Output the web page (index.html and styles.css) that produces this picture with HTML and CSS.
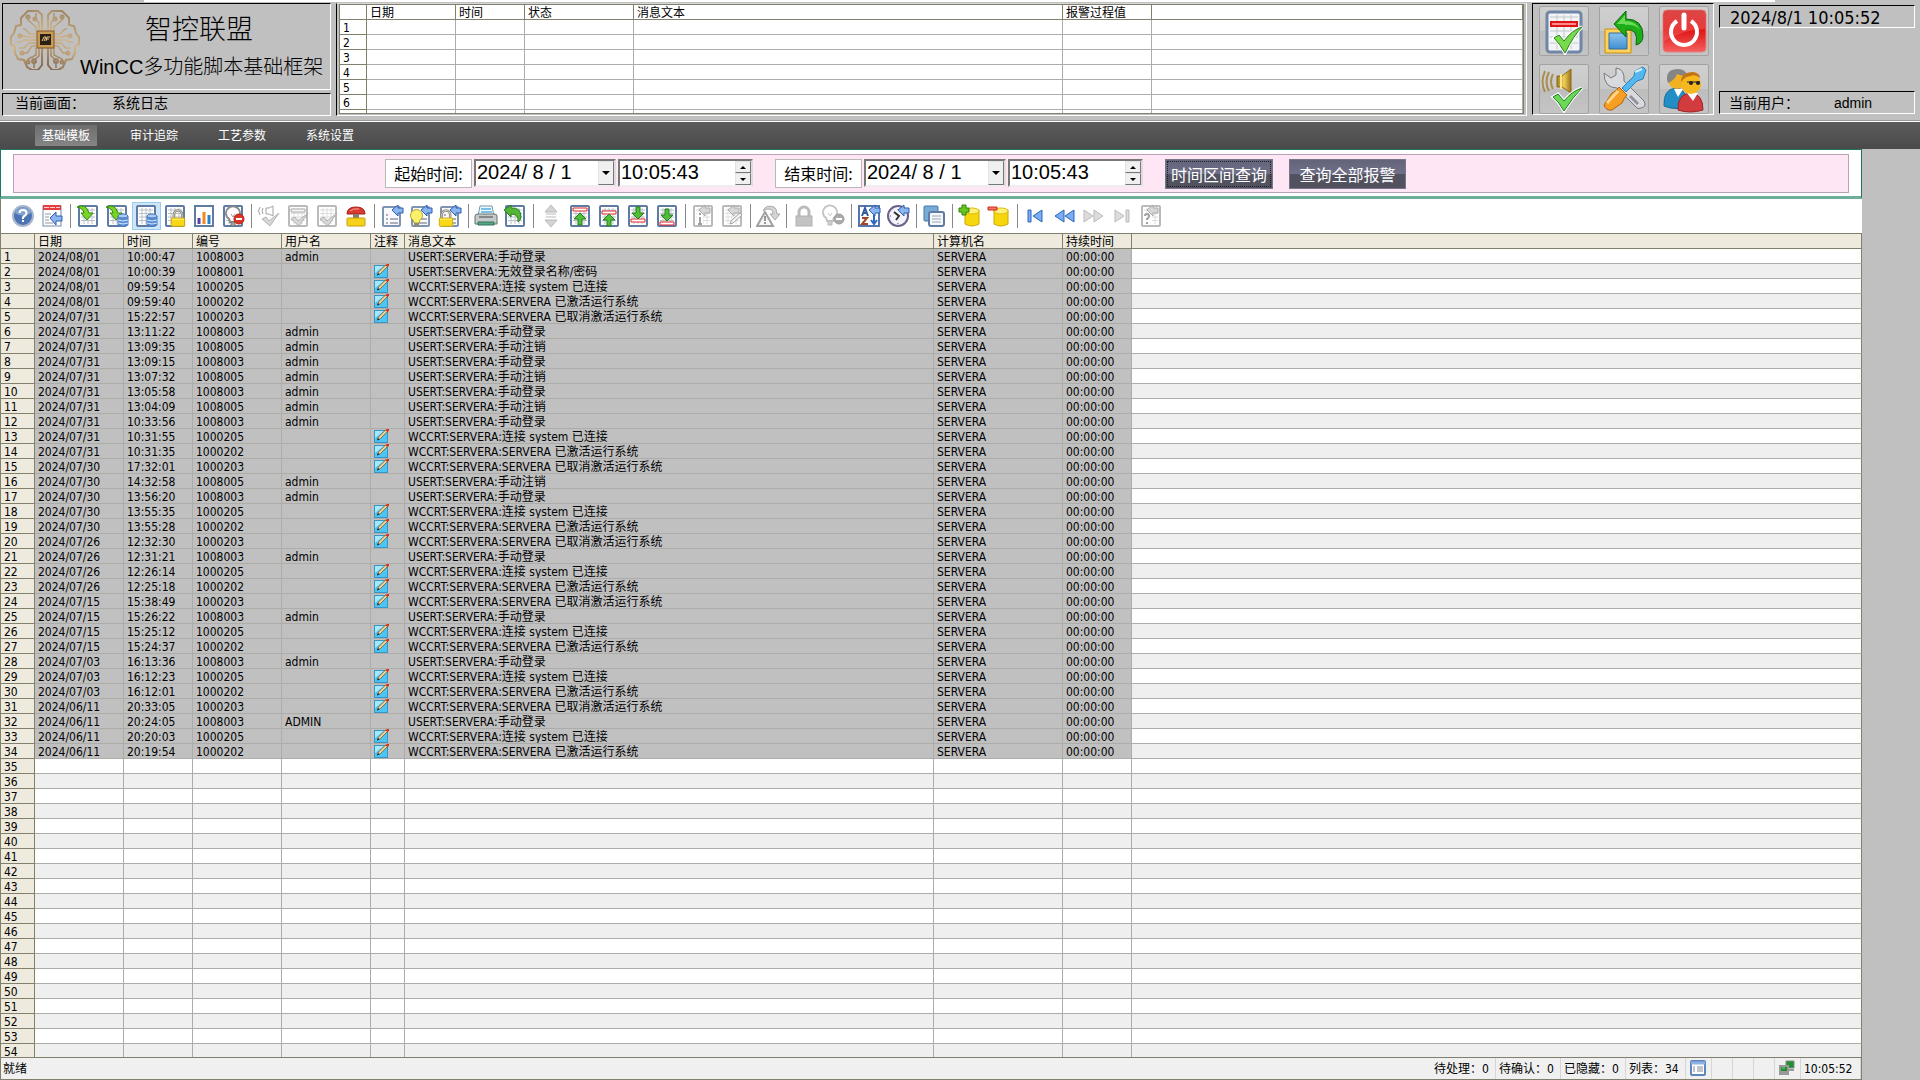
FILE: index.html
```html
<!DOCTYPE html>
<html lang="zh-CN">
<head>
  <meta charset="UTF-8">
  <meta name="viewport" content="width=device-width, initial-scale=1.0">
  <title>系统日志</title>
  <link rel="stylesheet" href="styles.css">
</head>
<body>
  <!-- Shared icon shapes -->
  <svg class="sprite" width="0" height="0" aria-hidden="true">
    <linearGradient id="g-gold" gradientUnits="userSpaceOnUse" x1="0" y1="0" x2="35" y2="60">
      <stop offset="0" stop-color="#8f7558"/><stop offset=".5" stop-color="#d2b487"/><stop offset="1" stop-color="#7c6048"/>
    </linearGradient>
    <linearGradient id="g-red" x1="0" y1="0" x2="0" y2="1">
      <stop offset="0" stop-color="#c92b2b"/><stop offset=".5" stop-color="#e01818"/><stop offset="1" stop-color="#f46060"/>
    </linearGradient>
    <linearGradient id="g-blue" x1="0" y1="0" x2="0" y2="1">
      <stop offset="0" stop-color="#8cc4ee"/><stop offset="1" stop-color="#3f8fd2"/>
    </linearGradient>
    <linearGradient id="g-horn" x1="0" y1="0" x2="1" y2="0">
      <stop offset="0" stop-color="#a57c1a"/><stop offset=".5" stop-color="#f0cf58"/><stop offset="1" stop-color="#9a7418"/>
    </linearGradient>

    <symbol id="sheet" viewBox="0 0 24 24">
      <rect x="3" y="2" width="18" height="20" rx="1" fill="#fff" stroke="#5d7ba3" stroke-width="2"/>
      <path d="M5 6h14M5 9.500h14M5 13h14M5 16.500h14M8 4v16M12 4v16M16 4v16" stroke="#b9c0c9" fill="none"/>
    </symbol>
    <symbol id="page" viewBox="0 0 24 24">
      <rect x="3" y="3" width="17" height="19" rx="1" fill="#f7f9fc" stroke="#7e94b5" stroke-width="2"/>
      <path d="M6 11h2M6 15h2M6 19h2M10 15h8M10 19h8" stroke="#667" fill="none"/>
    </symbol>
    <symbol id="left" viewBox="0 0 24 24">
      <path d="M12 6l6-5v3h5v5h-5v3z" fill="#8cb6f0" stroke="#2d5fb0"/>
    </symbol>
    <symbol id="db" viewBox="0 0 24 24">
      <path d="M13 12v9q5 3 10 0v-9z" fill="#5b8fd6" stroke="#4a78b8"/>
      <ellipse cx="18" cy="12" rx="5" ry="2" fill="#a9ccf5" stroke="#4a78b8"/>
      <path d="M13 16q5 2 10 0M13 19q5 2 10 0" fill="none" stroke="#cfe2fa"/>
    </symbol>
    <symbol id="down" viewBox="0 0 24 24">
      <path d="M1 3q9-4 12 6h4l-6 7-6-7h3q-1-5-7-6z" fill="#76d527" stroke="#328a0c"/>
    </symbol>
    <symbol id="lock" viewBox="0 0 24 24">
      <path d="M7 13V8a5 5 0 0 1 10 0v5" fill="none" stroke="#8c8778" stroke-width="3"/>
      <path d="M7 13V8a5 5 0 0 1 10 0v5" fill="none" stroke="#dfdbcb"/>
      <rect x="4" y="12" width="16" height="10" rx="1" fill="#f9d916" stroke="#cda205"/>
      <path d="M5 13.500h14" stroke="#fff18c"/>
    </symbol>
    <symbol id="bulb" viewBox="0 0 24 24">
      <path d="M9 18q0-3-3-5a7 7 0 1 1 12 0q-3 2-3 5z" fill="#fff" stroke="#8b8b8b" stroke-width="2"/>
      <path d="M10 18h4v4h-4z" fill="#a4a69c" stroke="#74766d"/>
      <path d="M10 10l2 3 2-3" fill="none" stroke="#999"/>
    </symbol>
    <symbol id="minus" viewBox="0 0 24 24">
      <circle cx="18" cy="15" r="5" fill="#df3424" stroke="#b51d12"/>
      <path d="M15 15h6" stroke="#fff" stroke-width="2"/>
    </symbol>
    <symbol id="check" viewBox="0 0 24 24">
      <path d="M5 15l4-2 3 4 10-8-9 13z" fill="#75ce52" stroke="#2a7f22"/>
    </symbol>
    <symbol id="up" viewBox="0 0 24 24">
      <path d="M12 9l6 6h-4v6h-4v-6H6z" fill="#52bd38" stroke="#22801a"/>
    </symbol>

    <!-- Toolbar icons -->
    <symbol id="i-help" viewBox="0 0 24 24">
      <circle cx="12" cy="12" r="10" fill="#4c74b2" stroke="#a9b7cc" stroke-width="2"/>
      <path d="M4 9a8.500 8.500 0 0 1 16 0q-8 5-16 0z" fill="#83a3d1"/>
      <path d="M8.500 9q0-3 3.500-3t3.500 3q0 2-2 3t-1.500 3" fill="none" stroke="#fff" stroke-width="2"/>
      <rect x="11" y="16" width="2" height="2" fill="#fff"/>
    </symbol>
    <symbol id="i-config" viewBox="0 0 24 24">
      <rect x="3" y="2" width="18" height="20" fill="#fff" stroke="#7288a8"/>
      <path d="M3 1h18v5H3z" fill="#e53e3e"/><path d="M4 3.500h16" stroke="#ffd0d0" stroke-dasharray="5 1"/>
      <path d="M5 10h6M5 13h4M5 16h4M5 19h8" stroke="#8f969f"/>
      <path d="M10 14l6-6v4h6v5h-6v4z" fill="#8cb6f0" stroke="#2d5fb0"/>
    </symbol>
    <symbol id="i-msg" viewBox="0 0 24 24"><use href="#sheet"/><use href="#down"/></symbol>
    <symbol id="i-short" viewBox="0 0 24 24"><use href="#sheet"/><use href="#down"/><use href="#db"/></symbol>
    <symbol id="i-long" viewBox="0 0 24 24"><use href="#sheet"/><use href="#db"/></symbol>
    <symbol id="i-locklist" viewBox="0 0 24 24"><use href="#sheet"/><use href="#lock" x="5" y="4" width="20" height="20"/></symbol>
    <symbol id="i-stat" viewBox="0 0 24 24">
      <rect x="3" y="2" width="18" height="20" fill="#fff" stroke="#5d7ba3" stroke-width="2"/>
      <path d="M7 20v-6" stroke="#5c3fa4" stroke-width="3"/><path d="M12 20V8" stroke="#ef8a22" stroke-width="3"/><path d="M17 20v-9" stroke="#2d7fc7" stroke-width="3"/>
    </symbol>
    <symbol id="i-hide" viewBox="0 0 24 24"><use href="#sheet"/><use href="#bulb"/><use href="#minus"/></symbol>
    <symbol id="i-horn" viewBox="0 0 24 24">
      <path d="M9 4h3l4-2v10l-4-2H9zM6 4q-2 3 0 6M3 3q-3 4 0 8" fill="none" stroke="#444"/><use href="#check"/>
    </symbol>
    <symbol id="i-ack1" viewBox="0 0 24 24"><use href="#sheet"/><path d="M5 5h14v3H5z" fill="#eee" stroke="#555"/><use href="#check"/></symbol>
    <symbol id="i-ackall" viewBox="0 0 24 24"><use href="#sheet"/><use href="#check"/></symbol>
    <symbol id="i-estop" viewBox="0 0 24 24">
      <path d="M3 10q0-7 9-7t9 7z" fill="#d93a30" stroke="#a32018"/><path d="M6 7q3-3 9-2" fill="none" stroke="#f7a49c"/>
      <path d="M9 10h6v5H9z" fill="#857d70"/><rect x="3" y="14" width="18" height="8" rx="1" fill="#f7d21c" stroke="#c79c08"/>
    </symbol>
    <symbol id="i-sel" viewBox="0 0 24 24"><use href="#page"/><use href="#left"/></symbol>
    <symbol id="i-selview" viewBox="0 0 24 24">
      <use href="#page"/><path d="M5 19q0-3-3-5a6 6 0 1 1 11 0q-3 2-3 5z" fill="#fbf06a" stroke="#b3a324"/><path d="M5 19h5v4H5z" fill="#8b8d80"/><use href="#left"/>
    </symbol>
    <symbol id="i-sellock" viewBox="0 0 24 24"><use href="#page"/><use href="#lock" x="-2" y="4" width="20" height="20"/><use href="#left"/></symbol>
    <symbol id="i-print" viewBox="0 0 24 24">
      <path d="M6 2h12l2 10H4z" fill="#f4fbff" stroke="#6999b3"/><path d="M7 5h10M7 8h11" stroke="#79c1e4" stroke-width="2"/>
      <path d="M1 12q0-2 3-2h16q3 0 3 2v8H1z" fill="#c4cac9" stroke="#68706e"/><path d="M5 13h14" stroke="#444"/><path d="M4 18h16v3H4z" fill="#55a886" stroke="#35715a"/>
    </symbol>
    <symbol id="i-export" viewBox="0 0 24 24">
      <use href="#sheet"/><path d="M1 6l7-5v3q10-1 10 9 0 3-3 5 1-8-7-8v3z" fill="#54b637" stroke="#2b7f15"/>
    </symbol>
    <symbol id="i-scroll" viewBox="0 0 24 24">
      <path d="M12 1l6 7H6zM7 10h10M7 13h10M12 23l6-7H6z" fill="#aaa" stroke="#777"/>
    </symbol>
    <symbol id="i-first" viewBox="0 0 24 24"><use href="#sheet"/><path d="M5 4h14v3H5z" fill="#fff" stroke="#e02525"/><use href="#up"/></symbol>
    <symbol id="i-prev" viewBox="0 0 24 24"><use href="#sheet"/><path d="M5 7h14v3H5z" fill="#fff" stroke="#e02525"/><use href="#up" y="1"/></symbol>
    <symbol id="i-next" viewBox="0 0 24 24"><use href="#sheet"/><path d="M5 15h14v3H5z" fill="#fff" stroke="#e02525"/><use href="#up" transform="matrix(1 0 0 -1 0 24)"/></symbol>
    <symbol id="i-last" viewBox="0 0 24 24"><use href="#sheet"/><path d="M5 18h14v3H5z" fill="#fff" stroke="#e02525"/><use href="#up" transform="matrix(1 0 0 -1 0 26)"/></symbol>
    <symbol id="i-info" viewBox="0 0 24 24"><use href="#sheet"/><path d="M6 8h6v12H6z" fill="#fff"/><path d="M9 9v2M9 13v7M7 20h4" stroke="#444" stroke-width="2"/><use href="#left" x="-4"/></symbol>
    <symbol id="i-comment" viewBox="0 0 24 24"><use href="#sheet"/><path d="M10 20l1-3 9-8 2 2-9 8z" fill="#eee" stroke="#444"/><use href="#left" x="-4"/></symbol>
    <symbol id="i-loop" viewBox="0 0 24 24">
      <path d="M7 7q3-7 11-4 3 2 3 7h3l-5 6-5-6h3q0-5-5-5-3 0-5 2z" fill="#aaa" stroke="#555"/>
      <path d="M9 8l8 14H1z" fill="#eee" stroke="#444" stroke-width="2"/><path d="M9 12v5M9 18v2" stroke="#333" stroke-width="2"/>
    </symbol>
    <symbol id="i-lock" viewBox="0 0 24 24">
      <path d="M7 12V8a5 5 0 0 1 10 0v4" fill="none" stroke="#777" stroke-width="3"/><rect x="4" y="12" width="16" height="10" fill="#888" stroke="#666"/>
    </symbol>
    <symbol id="i-unhide" viewBox="0 0 24 24"><use href="#bulb" x="-3" y="-1"/><use href="#minus"/></symbol>
    <symbol id="i-sort" viewBox="0 0 24 24">
      <rect x="2" y="2" width="20" height="20" fill="#fff" stroke="#5577ad" stroke-width="2"/>
      <path d="M5 12l3-8 3 8M6 9h4" fill="none" stroke="#315b9e" stroke-width="2"/><path d="M5 14h5l-5 6h6" fill="none" stroke="#a24528" stroke-width="2"/>
      <path d="M17 9v10M14 16l3 4 3-4" fill="none" stroke="#3268c2" stroke-width="2"/><use href="#left"/>
    </symbol>
    <symbol id="i-time" viewBox="0 0 24 24">
      <circle cx="12" cy="12" r="10" fill="#f4f2fb" stroke="#6b6288" stroke-width="2"/><path d="M8 8l5 4-3 4" fill="none" stroke="#333" stroke-width="2"/><path d="M12 5v1M12 19v1M4 12h1" stroke="#555"/><use href="#left"/>
    </symbol>
    <symbol id="i-copy" viewBox="0 0 24 24">
      <rect x="2" y="2" width="14" height="15" rx="1" fill="#76acd6" stroke="#4079a8"/><rect x="7" y="8" width="15" height="14" rx="2" fill="#f4f7fb" stroke="#5f7ba3" stroke-width="2"/><path d="M10 12h9M10 15h9M10 18h9" stroke="#98a5b5"/>
    </symbol>
    <symbol id="drum" viewBox="0 0 24 24">
      <path d="M7 6v14q7 4 14 0V6z" fill="#f6d70e" stroke="#cda800"/><ellipse cx="14" cy="7" rx="7" ry="3" fill="#fff07a" stroke="#dcba08"/>
    </symbol>
    <symbol id="i-backup" viewBox="0 0 24 24"><use href="#drum"/><path d="M4 1h4v3h3v4H8v3H4V8H1V4h3z" fill="#69c61f" stroke="#35800c"/></symbol>
    <symbol id="i-remove" viewBox="0 0 24 24"><use href="#drum"/><path d="M1 3h9v3H1z" fill="#f47a60" stroke="#cc2b18"/></symbol>
    <symbol id="i-begin" viewBox="0 0 24 24"><path d="M5 6h3v12H5zM19 6v12l-9-6z" fill="#78aef2" stroke="#2d62bb"/></symbol>
    <symbol id="i-rew" viewBox="0 0 24 24"><path d="M12 6v12l-9-6zM22 6v12l-9-6z" fill="#78aef2" stroke="#2d62bb"/></symbol>
    <symbol id="i-fwd" viewBox="0 0 24 24"><path d="M3 6v12l9-6zM13 6v12l9-6z" fill="#bbb" stroke="#777"/></symbol>
    <symbol id="i-end" viewBox="0 0 24 24"><path d="M5 6v12l9-6zM16 6h3v12h-3z" fill="#bbb" stroke="#777"/></symbol>
    <symbol id="i-ask" viewBox="0 0 24 24"><use href="#sheet"/><path d="M5 9h8v11H5z" fill="#fff"/><path d="M6 12q0-2 2-2t2 2-2 3v1M8 18v2" fill="none" stroke="#444" stroke-width="2"/><use href="#left" x="-4"/></symbol>
    <symbol id="i-note" viewBox="0 0 15 14">
      <rect x=".5" y="1.500" width="13" height="12" fill="#4cc4f4" stroke="#3a94c4"/><path d="M1 2h9L1 9z" fill="#a5e8fb"/>
      <path d="M3.500 11l1-3 7-7 2 1.500-7 7z" fill="#f2d596" stroke="#6b4a20" stroke-width=".7"/><path d="M11.500 1L13 0h2v1.500L13.500 3z" fill="#d8321e"/><path d="M3 11.500l1-2.500 1.500 1.500z" fill="#222"/>
    </symbol>
  </svg>

  <div class="app">
    <header class="top">
      <div class="brand">
        <div class="panel brand-box">
          <svg class="brand-logo" viewBox="0 0 70 60" role="img" aria-label="logo">
            <g id="half" fill="none" stroke="url(#g-gold)" stroke-width="2">
              <path d="M32 21V5l-4-4H18l-7 7v7l-5 1-2 7-3 4v7l4 3v6l3 6 6 1 3 7 5 3h6l4-5V38"/>
              <path d="M29 21V13l-3-4V3M26 21v-4l-8-7V8M29 38v8l-5 4v8M26 38v7l-8 4v3" stroke-width="1.500"/>
              <path d="M26 24h-6l-5-5h-2M26 27h-8l-4-1h-3M26 30H14l-3 2H7M26 33h-7l-5 5H9M26 36h-4l-5 7h-4" stroke-width="1.500"/>
              <circle cx="18" cy="7" r="1.500"/><circle cx="10" cy="26" r="1.500"/><circle cx="18" cy="52" r="1.500"/><circle cx="12" cy="43" r="1.500"/><circle cx="25" cy="9" r="1.500"/><circle cx="24" cy="51" r="2"/>
            </g>
            <use href="#half" transform="matrix(-1 0 0 1 70 0)"/>
            <rect x="27" y="21" width="17" height="17" fill="#c79b52" stroke="#83592b"/>
            <rect x="30" y="24" width="11" height="11" fill="#2a2017"/>
            <path d="M32 31l2-4h2l-2 4M36 31l1-4h3M36 29h3" fill="none" stroke="#e8c987"/>
          </svg>
          <div class="brand-text">
            <h1 class="brand-name">智控联盟</h1>
            <p class="brand-sub">WinCC多功能脚本基础框架</p>
          </div>
        </div>
        <div class="panel brand-page"><span>当前画面：</span><span>系统日志</span></div>
      </div>

      <div class="panel alarm-panel">
        <div class="alarm-list">
          <table class="grid alarm-table">
            <colgroup><col class="w-no-sm"><col class="w-date"><col class="w-time"><col class="w-state"><col class="w-text-sm"><col class="w-date"><col></colgroup>
            <thead><tr><th></th><th>日期</th><th>时间</th><th>状态</th><th>消息文本</th><th>报警过程值</th><th></th></tr></thead>
            <tbody id="alarm-rows"></tbody>
          </table>
        </div>
      </div>

      <div class="panel actions">
        <button class="action" aria-label="确认报警">
          <svg viewBox="0 0 48 48"><rect x="7" y="5" width="34" height="40" rx="3" fill="#f2f4f6" stroke="#6f86a6" stroke-width="3"/>
            <path d="M10 10h28M10 24h28M10 30h28M10 36h28M17 8v34M24 8v34M31 8v34" stroke="#c3c7cc"/>
            <path d="M11 15h26v4H11z" fill="#f88" stroke="#e01414" stroke-width="2"/>
            <path d="M14 31l5-3 5 6q8-11 18-14-8 8-17 26-5-9-11-15z" fill="#78db4c" stroke="#fff" stroke-width="3"/><path d="M14 31l5-3 5 6q8-11 18-14-8 8-17 26-5-9-11-15z" fill="#78db4c" stroke="#2c7c21"/></svg>
        </button>
        <button class="action" aria-label="返回">
          <svg viewBox="0 0 48 48"><path d="M5 22h26v24H5z" fill="#ffd25a" stroke="#c58e12"/><path d="M9 26h18v16H9z" fill="url(#g-blue)" stroke="#326ba3"/>
            <path d="M14 17L26 4v8q17 0 17 17 0 7-7 9 3-17-10-15v7z" fill="#1bae18" stroke="#0b640a"/><path d="M17 17l8-9v6q11 0 15 9-5-6-15-5v-1z" fill="#6ddb57"/></svg>
        </button>
        <button class="action" aria-label="退出">
          <svg viewBox="0 0 48 48"><rect x="3" y="3" width="43" height="42" rx="4" fill="url(#g-red)" stroke="#e78080"/><path d="M4 4h41v18Q26 22 4 34z" fill="#ff7777" opacity=".35"/>
            <path d="M17 14a13 13 0 1 0 14 0" fill="none" stroke="#fff" stroke-width="4"/><path d="M24 8v13" stroke="#fff" stroke-width="5" stroke-linecap="round"/></svg>
        </button>
        <button class="action" aria-label="消音">
          <svg viewBox="0 0 48 48"><path d="M17 11h5l9-7v24l-9-6h-5z" fill="url(#g-horn)" stroke="#8d6b16"/><path d="M21 9v15" stroke="#fbe588" stroke-width="2"/>
            <path d="M13 9q-4 8 0 15M9 7q-5 10 0 19M5 6q-5 11 0 21" fill="none" stroke="#aa8d50" stroke-width="2"/>
            <path d="M13 32l5-3 6 7q8-10 18-13-9 9-18 23-5-9-11-14z" fill="#6cd858" stroke="#fff" stroke-width="3"/><path d="M13 32l5-3 6 7q8-10 18-13-9 9-18 23-5-9-11-14z" fill="#6cd858" stroke="#227a26"/></svg>
        </button>
        <button class="action" aria-label="设置">
          <svg viewBox="0 0 48 48"><path d="M4 8l7 5 5-3V3q9 1 8 13l20 20q3 6-3 7-3 2-6-2L17 23Q4 23 4 8z" fill="#d9dadd" stroke="#77797e"/><path d="M30 31l8 8" stroke="#909399" stroke-width="3"/>
            <path d="M22 23L34 11l1-5 8-4 3 3-3 9-6 2-11 11z" fill="#54b8ee" stroke="#2983b8"/><path d="M35 7l7-3" stroke="#d6f2ff" stroke-width="2"/>
            <path d="M19 22l8 8q-3 3-5 8L12 45q-6 1-8-5l8-12q5-2 7-6z" fill="#f59e24" stroke="#b76108"/><path d="M7 38l11-12" stroke="#ffd58b" stroke-width="3"/></svg>
        </button>
        <button class="action" aria-label="用户">
          <svg viewBox="0 0 48 48"><path d="M4 41q-1-17 12-18 10 0 12 18-12 5-24 0z" fill="#218fc5" stroke="#186b97"/><path d="M14 24l4 8 5-8z" fill="#fff"/><circle cx="17" cy="15" r="9" fill="#f2b121"/><path d="M7 15Q6 4 18 4q8 0 9 7-6 0-10-2-2 6-9 9z" fill="#858585"/>
            <path d="M18 45q-1-16 13-17 12 1 12 17-13 4-25 0z" fill="#d33c3e" stroke="#9e2023"/><path d="M27 28l6 8 5-8z" fill="#fff"/><circle cx="31" cy="19" r="10" fill="#f7b81d"/><path d="M21 17q0-10 12-10 7 1 7 6-5-4-9-2-6 0-10 6z" fill="#c27512"/>
            <path d="M27 17h13" stroke="#222"/><circle cx="31" cy="18" r="2" fill="#222"/><circle cx="38" cy="18" r="2" fill="#222"/></svg>
        </button>
      </div>

      <div class="info">
        <div class="panel clock">2024/8/1 10:05:52</div>
        <div class="panel user"><span>当前用户：</span><span>admin</span></div>
      </div>
    </header>

    <nav class="menu">
      <a class="menu-link active" href="#">基础模板</a>
      <a class="menu-link" href="#">审计追踪</a>
      <a class="menu-link" href="#">工艺参数</a>
      <a class="menu-link" href="#">系统设置</a>
    </nav>

    <main class="screen">
      <section class="filter">
        <form class="filter-bar" onsubmit="return false">
          <div class="period">
            <label class="period-label" for="from-date">起始时间:</label>
            <div class="field date-field">
              <input id="from-date" type="text" value="2024/ 8 / 1">
              <button class="drop" aria-label="选择起始日期"><svg viewBox="0 0 8 4"><path d="M0 0h8L4 4z"/></svg></button>
            </div>
            <div class="field time-field">
              <input type="text" value="10:05:43" aria-label="起始时刻">
              <div class="spin">
                <button aria-label="增加"><svg viewBox="0 0 8 4"><path d="M0 4h8L4 0z"/></svg></button>
                <button aria-label="减少"><svg viewBox="0 0 8 4"><path d="M0 0h8L4 4z"/></svg></button>
              </div>
            </div>
          </div>
          <div class="period">
            <label class="period-label" for="to-date">结束时间:</label>
            <div class="field date-field">
              <input id="to-date" type="text" value="2024/ 8 / 1">
              <button class="drop" aria-label="选择结束日期"><svg viewBox="0 0 8 4"><path d="M0 0h8L4 4z"/></svg></button>
            </div>
            <div class="field time-field">
              <input type="text" value="10:05:43" aria-label="结束时刻">
              <div class="spin">
                <button aria-label="增加"><svg viewBox="0 0 8 4"><path d="M0 4h8L4 0z"/></svg></button>
                <button aria-label="减少"><svg viewBox="0 0 8 4"><path d="M0 0h8L4 4z"/></svg></button>
              </div>
            </div>
          </div>
          <div class="queries">
            <button class="query focused">时间区间查询</button>
            <button class="query wide">查询全部报警</button>
          </div>
        </form>
      </section>

      <div class="toolbar" id="toolbar"></div>

      <div class="log">
        <table class="grid log-table">
          <colgroup><col class="w-no"><col class="w-date"><col class="w-time"><col class="w-date"><col class="w-date"><col class="w-note"><col class="w-text"><col class="w-pc"><col class="w-time"><col></colgroup>
          <thead><tr><th></th><th>日期</th><th>时间</th><th>编号</th><th>用户名</th><th>注释</th><th>消息文本</th><th>计算机名</th><th>持续时间</th><th></th></tr></thead>
          <tbody id="log-rows"></tbody>
        </table>
      </div>

      <footer class="status">
        <span class="status-ready">就绪</span>
        <span class="cell w65">待处理：0</span>
        <span class="cell w65">待确认：0</span>
        <span class="cell w65">已隐藏：0</span>
        <span class="cell w60">列表：34</span>
        <span class="cell w26"><svg viewBox="0 0 16 16"><rect x="1" y="1" width="14" height="14" rx="1" fill="#fff" stroke="#5f86bd" stroke-width="2"/><path d="M1 3h14" stroke="#8db2e3" stroke-width="3"/><path d="M3 7h2M3 9h2M3 11h2M7 7h6M7 9h6M7 11h6" stroke="#889"/></svg></span>
        <span class="cell w21"></span>
        <span class="cell w21"></span>
        <span class="cell w21"></span>
        <span class="cell w26"><svg viewBox="0 0 16 16"><path d="M7 1h8v7H7z" fill="#1f8f31" stroke="#888"/><path d="M8 10h7" stroke="#999" stroke-width="2"/><path d="M1 6h8v6H1z" fill="#1f8f31" stroke="#999" stroke-width="2"/><path d="M3 8h3" stroke="#7dd68a"/><path d="M0 14h10" stroke="#999" stroke-width="2"/></svg></span>
        <span class="cell w60">10:05:52</span>
      </footer>
    </main>
  </div>
  <script src="script.js"></script>
</body>
</html>
```

FILE: styles.css
```css
* {
  box-sizing: border-box;
}

body {
  margin: 0;
  background: #c0c0c0;
  color: #000;
  font-family: "DejaVu Sans Condensed", "Noto Sans CJK SC", sans-serif;
  font-size: 12px;
}

button, input {
  font: inherit;
  color: inherit;
  margin: 0;
  padding: 0;
}

svg {
  display: block;
}

.app {
  height: 100vh;
  display: flex;
  flex-direction: column;
}

.panel {
  border: 1px solid;
  border-color: #000 #fff #fff #000;
}

/* Header */
.top {
  display: flex;
  gap: 5px;
  padding: 3px 5px 4px 2px;
  height: 121px;
  background: linear-gradient(#fff, #fff) 144px 0 / calc(100% - 289px) 2px no-repeat;
  border-bottom: 1px solid #999;
  flex: none;
}

.brand {
  width: 329px;
  display: flex;
  flex-direction: column;
  gap: 3px;
}

.brand-box {
  flex: 1;
  display: flex;
  padding: 6px 8px 0 7px;
}

.brand-logo {
  width: 70px;
  height: 60px;
  flex: none;
}

.brand-text {
  flex: 1;
  font-family: "Liberation Sans", "Noto Sans CJK SC", sans-serif;
  white-space: nowrap;
}

.brand-name {
  margin: 0;
  padding-left: 65px;
  font-size: 27px;
  line-height: 40px;
  font-weight: 300;
}

.brand-sub {
  margin: 0;
  font-size: 20px;
  line-height: 34px;
  font-weight: 300;
}

.brand-page, .user {
  display: flex;
  height: 23px;
  padding-left: 12px;
  gap: 27px;
  font-family: "Liberation Sans", "Noto Sans CJK SC", sans-serif;
  font-size: 14px;
  line-height: 19px;
}

.alarm-panel {
  flex: 1;
  padding: 0 2px;
  border-top-color: #d8d8d8;
}

.alarm-list {
  height: 110px;
  overflow: hidden;
  border: 1px solid #80806c;
  border-width: 0 1px 1px 0;
}

.actions {
  width: 182px;
  height: 112px;
  padding: 2px 4px 0 6px;
  display: grid;
  grid-template-columns: repeat(3, 50px);
  grid-auto-rows: 50px;
  gap: 8px 10px;
}

.action {
  border: 1px solid #a2a2a2;
  border-radius: 2px;
  background: linear-gradient(#d0d0d0, #c8c8c8 50%, #bdbdbd 50%, #c4c4c4);
}

.action svg {
  width: 48px;
  height: 48px;
}

.info {
  width: 196px;
  padding: 2px 0;
  display: flex;
  flex-direction: column;
  justify-content: space-between;
}

.clock {
  height: 23px;
  padding-left: 10px;
  font-size: 18px;
  line-height: 23px;
}

.user {
  padding-left: 9px;
  gap: 35px;
  line-height: 22px;
}

/* Menu */
.menu {
  flex: none;
  display: flex;
  gap: 26px;
  height: 28px;
  padding: 3px 35px;
  border-top: 1px solid #fff;
  background: linear-gradient(#5c5c5c, #4a4a4a);
}

.menu-link {
  padding: 0 7px;
  height: 21px;
  line-height: 22px;
  color: #fff;
  text-decoration: none;
  border-radius: 1px;
}

.menu-link.active {
  background: linear-gradient(#6e6e6e, #858585);
}

/* Date filter */
.screen {
  flex: 1;
  min-height: 0;
  margin-right: 58px;
  display: flex;
  flex-direction: column;
}

.filter {
  flex: none;
  height: 50px;
  padding: 4px 12px;
  background: #fff;
  border: 1px solid #1f7560;
  border-bottom: 3px solid #6fae9b;
}

.filter-bar {
  height: 39px;
  display: flex;
  gap: 22px;
  padding: 4px 0 0 371px;
  background: #ffe6f5;
  border: 1px solid #b9a2b8;
}

.period {
  display: flex;
  gap: 2px;
}

.period-label {
  width: 87px;
  height: 29px;
  border: 1px solid #b8b8b8;
  background: #fff;
  text-align: center;
  font-family: "Noto Sans CJK SC", sans-serif;
  font-size: 16px;
  line-height: 26px;
}

.field {
  display: flex;
  height: 28px;
  background: #fff;
  border: 2px solid;
  border-color: #777 #ddd #eee #777;
}

.field input {
  flex: 1;
  min-width: 0;
  border: 0;
  padding: 0 0 1px 1px;
  background: none;
  font-family: "Liberation Sans", sans-serif;
  font-size: 20px;
}

.date-field {
  width: 142px;
}

.time-field {
  width: 135px;
}

.drop, .spin button {
  width: 16px;
  display: flex;
  align-items: center;
  justify-content: center;
  background: #f0f0f0;
  border: 1px solid;
  border-color: #e3e3e3 #777 #777 #e3e3e3;
}

.drop svg {
  width: 8px;
  height: 4px;
}

.spin {
  display: flex;
  flex-direction: column;
}

.spin button {
  flex: 1;
}

.spin svg {
  width: 6px;
  height: 3px;
}

.queries {
  display: flex;
  gap: 16px;
}

.query {
  width: 108px;
  height: 30px;
  color: #fff;
  font-family: "Noto Sans CJK SC", sans-serif;
  font-size: 16px;
  line-height: 26px;
  white-space: nowrap;
  background: linear-gradient(#63637a, #70708a 50%, #51515f 50%, #51515f);
  border: 1px solid #77778a;
}

.query.wide {
  width: 117px;
}

.query.focused {
  outline: 1px dotted #222;
  outline-offset: -3px;
}

/* Toolbar */
.toolbar {
  flex: none;
  height: 34px;
  display: flex;
  align-items: center;
  padding-left: 8px;
  background: #fff;
  border-left: 1px solid #80806c;
}

.tool {
  width: 29px;
  height: 28px;
  padding: 0 1px;
  border: 1px solid transparent;
  background: none;
}

.tool svg {
  width: 24px;
  height: 24px;
}

.tool.active {
  background: #cde6fa;
  border-color: #9ccbf0;
}

.tool.off svg {
  filter: grayscale(1);
  opacity: .5;
}

.sep {
  width: 1px;
  height: 24px;
  margin: 0 3px;
  background: #888;
}

/* Tables */
.grid {
  width: 100%;
  table-layout: fixed;
  border-spacing: 0;
  border: 1px solid #80806c;
  border-right: 0;
}

.grid th, .grid td {
  height: 15px;
  padding: 2px 3px 0;
  overflow: hidden;
  font-weight: normal;
  line-height: 12px;
  text-align: left;
  white-space: nowrap;
  border-right: 1px solid #acaca8;
  border-bottom: 1px solid #acaca8;
}

.grid thead th, .grid tbody th {
  border-color: #80806c;
}

.w-no { width: 34px; }
.w-no-sm { width: 27px; }
.w-date { width: 89px; }
.w-time { width: 69px; }
.w-state { width: 109px; }
.w-note { width: 34px; }
.w-text { width: 529px; }
.w-text-sm { width: 429px; }
.w-pc { width: 129px; }

.alarm-table {
  background: #fff;
}

.log {
  flex: 1;
  min-height: 0;
  overflow: hidden;
  background: #fff;
  border-bottom: 1px solid #80806c;
}

.log-table th {
  background: #eeeadd;
}

.log-table tbody tr:nth-child(even) {
  background: #efefef;
}

.log-table .filled td:not(:last-child) {
  background: #c0c0c0;
}

.log-table td:last-child {
  border-right-color: #80806c;
}

.grid .note {
  padding: 0 3px;
}

.note svg {
  width: 15px;
  height: 14px;
}

/* Status bar */
.status {
  flex: none;
  display: flex;
  height: 22px;
  background: #f0f0f0;
  border: 1px solid #80806c;
  border-top: 0;
  line-height: 23px;
}

.status-ready {
  flex: 1;
  padding-left: 2px;
}

.cell {
  padding: 0 3px;
  white-space: nowrap;
  border-right: 1px solid #d6d6d6;
}

.cell svg {
  width: 16px;
  height: 16px;
  margin: 2px 1px;
}

.w65 { width: 65px; }
.w60 { width: 60px; }
.w26 { width: 26px; }
.w21 { width: 21px; }
```

FILE: script.js
```javascript
const messages = {
  1008003: "USERT:SERVERA:手动登录",
  1008005: "USERT:SERVERA:手动注销",
  1008001: "USERT:SERVERA:无效登录名称/密码",
  1000205: "WCCRT:SERVERA:连接 system 已连接",
  1000202: "WCCRT:SERVERA:SERVERA 已激活运行系统",
  1000203: "WCCRT:SERVERA:SERVERA 已取消激活运行系统"
};

// date, time, message number, user
const log = [
  ["2024/08/01", "10:00:47", 1008003, "admin"],
  ["2024/08/01", "10:00:39", 1008001, ""],
  ["2024/08/01", "09:59:54", 1000205, ""],
  ["2024/08/01", "09:59:40", 1000202, ""],
  ["2024/07/31", "15:22:57", 1000203, ""],
  ["2024/07/31", "13:11:22", 1008003, "admin"],
  ["2024/07/31", "13:09:35", 1008005, "admin"],
  ["2024/07/31", "13:09:15", 1008003, "admin"],
  ["2024/07/31", "13:07:32", 1008005, "admin"],
  ["2024/07/31", "13:05:58", 1008003, "admin"],
  ["2024/07/31", "13:04:09", 1008005, "admin"],
  ["2024/07/31", "10:33:56", 1008003, "admin"],
  ["2024/07/31", "10:31:55", 1000205, ""],
  ["2024/07/31", "10:31:35", 1000202, ""],
  ["2024/07/30", "17:32:01", 1000203, ""],
  ["2024/07/30", "14:32:58", 1008005, "admin"],
  ["2024/07/30", "13:56:20", 1008003, "admin"],
  ["2024/07/30", "13:55:35", 1000205, ""],
  ["2024/07/30", "13:55:28", 1000202, ""],
  ["2024/07/26", "12:32:30", 1000203, ""],
  ["2024/07/26", "12:31:21", 1008003, "admin"],
  ["2024/07/26", "12:26:14", 1000205, ""],
  ["2024/07/26", "12:25:18", 1000202, ""],
  ["2024/07/15", "15:38:49", 1000203, ""],
  ["2024/07/15", "15:26:22", 1008003, "admin"],
  ["2024/07/15", "15:25:12", 1000205, ""],
  ["2024/07/15", "15:24:37", 1000202, ""],
  ["2024/07/03", "16:13:36", 1008003, "admin"],
  ["2024/07/03", "16:12:23", 1000205, ""],
  ["2024/07/03", "16:12:01", 1000202, ""],
  ["2024/06/11", "20:33:05", 1000203, ""],
  ["2024/06/11", "20:24:05", 1008003, "ADMIN"],
  ["2024/06/11", "20:20:03", 1000205, ""],
  ["2024/06/11", "20:19:54", 1000202, ""]
];

const note = '<svg><use href="#i-note"/></svg>';
let rows = "";
for (let i = 0; i < 54; i++) {
  const e = log[i];
  if (e) {
    const cells = [e[0], e[1], e[2], e[3], e[3] ? "" : note, messages[e[2]], "SERVERA", "00:00:00", ""];
    rows += `<tr class="filled"><th>${i + 1}</th>` + cells.map((c, n) => `<td${n === 4 ? ' class="note"' : ""}>${c}</td>`).join("") + "</tr>";
  } else {
    rows += `<tr><th>${i + 1}</th>${"<td></td>".repeat(9)}</tr>`;
  }
}
document.getElementById("log-rows").innerHTML = rows;

let alarms = "";
for (let i = 1; i <= 7; i++) {
  alarms += `<tr><th>${i < 7 ? i : ""}</th>${"<td></td>".repeat(6)}</tr>`;
}
document.getElementById("alarm-rows").innerHTML = alarms;

// "-" disabled, "+" pressed, "|" separator
const tools = [
  "help 帮助", "config 组态", "|", "msg 消息列表", "short 短期归档", "+long 长期归档", "locklist 锁定列表", "stat 统计", "hide 隐藏列表", "|",
  "-horn 确认报警器", "-ack1 单个确认", "-ackall 组确认", "estop 紧急确认", "|", "sel 选择", "selview 显示选项", "sellock 锁定选项", "|",
  "print 打印", "export 导出", "|", "-scroll 自动滚动", "first 首条", "prev 上一条", "next 下一条", "last 末条", "|",
  "-info 信息文本", "-comment 注释", "|", "-loop 报警回路", "|", "-lock 锁定", "-unhide 隐藏", "|", "sort 排序", "time 时基", "|",
  "copy 复制", "|", "backup 连接备份", "remove 断开备份", "|", "begin 首页", "rew 上一页", "-fwd 下一页", "-end 末页", "-ask 说明"
];
document.getElementById("toolbar").innerHTML = tools.map(t => {
  if (t === "|") return '<span class="sep"></span>';
  const state = t[0] === "-" ? " off" : t[0] === "+" ? " active" : "";
  const [icon, label] = t.replace(/^[-+]/, "").split(" ");
  return `<button class="tool${state}" aria-label="${label}"><svg><use href="#i-${icon}"/></svg></button>`;
}).join("");
```
